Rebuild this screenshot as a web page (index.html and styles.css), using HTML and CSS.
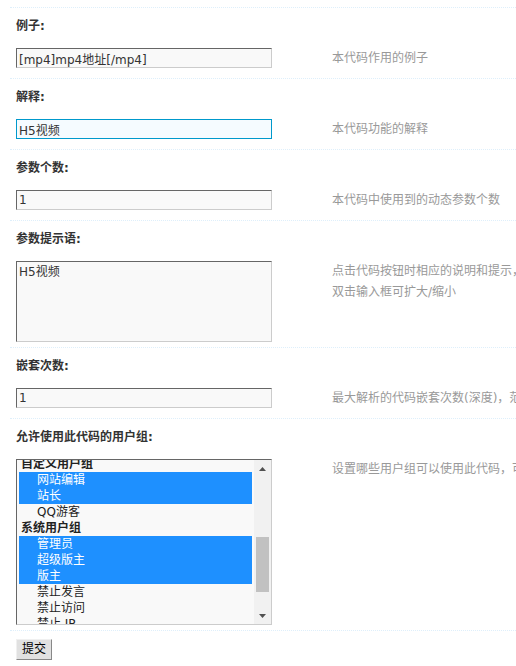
FILE: index.html
```html
<!DOCTYPE html>
<html lang="zh-CN">
<head>
<meta charset="utf-8">
<title>编辑代码</title>
<link rel="stylesheet" href="styles.css">
</head>
<body>
<div class="page">
  <div class="form">
    <section class="field">
      <div class="label">例子:</div>
      <div class="row">
        <div class="ctrl"><input class="txt" type="text" value="[mp4]mp4地址[/mp4]"></div>
        <div class="tip">本代码作用的例子</div>
      </div>
    </section>
    <section class="field">
      <div class="label">解释:</div>
      <div class="row">
        <div class="ctrl"><input class="txt focus" type="text" value="H5视频"></div>
        <div class="tip">本代码功能的解释</div>
      </div>
    </section>
    <section class="field">
      <div class="label">参数个数:</div>
      <div class="row">
        <div class="ctrl"><input class="txt" type="text" value="1"></div>
        <div class="tip">本代码中使用到的动态参数个数</div>
      </div>
    </section>
    <section class="field">
      <div class="label">参数提示语:</div>
      <div class="row tall">
        <div class="ctrl"><textarea class="tarea">H5视频</textarea></div>
        <div class="tip">点击代码按钮时相应的说明和提示，多个参数提示用换行分隔<br>双击输入框可扩大/缩小</div>
      </div>
    </section>
    <section class="field">
      <div class="label">嵌套次数:</div>
      <div class="row">
        <div class="ctrl"><input class="txt" type="text" value="1"></div>
        <div class="tip">最大解析的代码嵌套次数(深度)，范围 1～3</div>
      </div>
    </section>
    <section class="field">
      <div class="label">允许使用此代码的用户组:</div>
      <div class="row tall">
        <div class="ctrl">
          <div class="listbox">
            <div class="options">
              <div class="opts-inner">
                <div class="grp">自定义用户组</div>
                <div class="opt sel">网站编辑</div>
                <div class="opt sel">站长</div>
                <div class="opt">QQ游客</div>
                <div class="grp">系统用户组</div>
                <div class="opt sel">管理员</div>
                <div class="opt sel">超级版主</div>
                <div class="opt sel">版主</div>
                <div class="opt">禁止发言</div>
                <div class="opt">禁止访问</div>
                <div class="opt">禁止 IP</div>
              </div>
            </div>
            <div class="sbar">
              <div class="sbtn"><svg width="7" height="4" viewBox="0 0 7 4"><polygon points="0,4 3.5,0 7,4" fill="#505050"/></svg></div>
              <div class="track"><div class="thumb"></div></div>
              <div class="sbtn"><svg width="7" height="4" viewBox="0 0 7 4"><polygon points="0,0 7,0 3.5,4" fill="#505050"/></svg></div>
            </div>
          </div>
        </div>
        <div class="tip">设置哪些用户组可以使用此代码，可以按住 CTRL 多选</div>
      </div>
    </section>
    <section class="field submit">
      <button class="btn" type="button">提交</button>
    </section>
  </div>
</div>
</body>
</html>
```
FILE: styles.css
```css
html, body {
  margin: 0;
  padding: 0;
  background: #fff;
  overflow: hidden;
}
body {
  font: 12px/1.5 "DejaVu Sans", "Noto Sans CJK SC", sans-serif;
  color: #333;
}
.page {
  padding: 7px 0 0 10px;
}
.form {
  width: 720px;
}
.field {
  border-top: 1px dotted #deeffb;
}
.label {
  font-weight: bold;
  line-height: 16px;
  padding: 10px 0 6px 6px;
  color: #333;
}
.row {
  display: flex;
  align-items: flex-start;
  padding: 8px 0 10px;
}
.row.tall {
  padding-bottom: 5px;
}
.ctrl {
  flex: none;
  width: 316px;
  padding-left: 6px;
  box-sizing: border-box;
}
.tip {
  padding-left: 6px;
  color: #999;
  line-height: 20px;
  white-space: nowrap;
}
.tall .tip {
  line-height: 21px;
}
.txt, .tarea {
  display: block;
  box-sizing: border-box;
  width: 256px;
  margin: 0;
  padding: 2px;
  border: 1px solid;
  border-color: #666 #ccc #ccc #666;
  background: #f9f9f9;
  font: 12px/14px "DejaVu Sans", "Noto Sans CJK SC", sans-serif;
  color: #333;
  outline: none;
}
.txt {
  height: 20px;
}
.txt.focus {
  border-color: #09c;
  background: #f5fbff;
}
.tarea {
  height: 81px;
  line-height: 16px;
  resize: none;
  overflow: hidden;
}
.listbox {
  display: flex;
  box-sizing: border-box;
  width: 256px;
  height: 166px;
  border: 1px solid;
  border-color: #666 #ccc #ccc #666;
  background: #f9f9f9;
  overflow: hidden;
}
.options {
  flex: 1;
  overflow: hidden;
  padding: 0 2px;
}
.opts-inner {
  margin-top: -4px;
}
.grp {
  font-weight: bold;
  line-height: 16px;
  padding-left: 2px;
  color: #222;
}
.opt {
  line-height: 16px;
  padding-left: 18px;
  color: #222;
}
.opt.sel {
  background: #1e90ff;
  color: #fff;
}
.sbar {
  flex: none;
  width: 17px;
  background: #f1f1f1;
  display: flex;
  flex-direction: column;
}
.sbtn {
  height: 17px;
  display: flex;
  align-items: center;
  justify-content: center;
}
.sbtn svg {
  display: block;
}
.track {
  flex: 1;
  padding-top: 60px;
}
.thumb {
  height: 55px;
  margin: 0 2px;
  background: #c1c1c1;
}
.submit {
  padding: 8px 0 10px 6px;
}
.btn {
  display: block;
  box-sizing: border-box;
  width: 36px;
  height: 21px;
  margin: 0;
  padding: 0;
  border: 1px solid;
  border-color: #f0f0f0 #888 #888 #f0f0f0;
  background: #e1e1e1;
  font: 12px/17px "DejaVu Sans", "Noto Sans CJK SC", sans-serif;
  color: #000;
}
```
